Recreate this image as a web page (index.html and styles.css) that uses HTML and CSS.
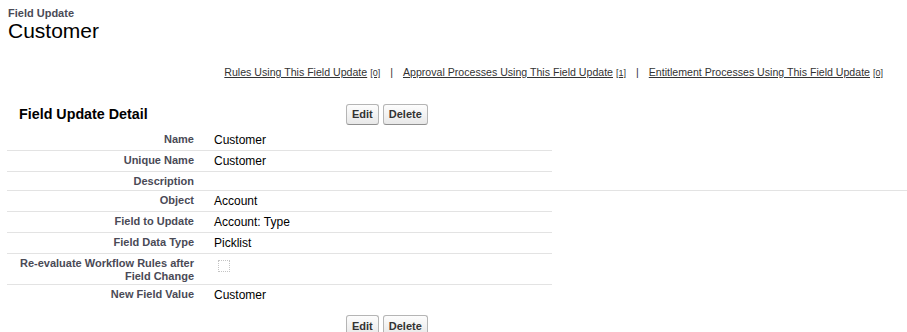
FILE: index.html
```html
<!DOCTYPE html>
<html lang="en">
<head>
    <meta charset="UTF-8">
    <title>Field Update: Customer</title>
    <link rel="stylesheet" href="styles.css">
</head>
<body>
    <div class="page-head">
        <div class="page-type">Field Update</div>
        <h1 class="page-title">Customer</h1>
    </div>

    <div class="links">
        <a href="#">Rules Using This Field Update<span class="count">[0]</span></a>
        <span class="sep">|</span>
        <a href="#">Approval Processes Using This Field Update<span class="count">[1]</span></a>
        <span class="sep">|</span>
        <a href="#">Entitlement Processes Using This Field Update<span class="count">[0]</span></a>
    </div>

    <div class="detail">
        <div class="detail-head">
            <h2 class="detail-title">Field Update Detail</h2>
            <div class="buttons">
                <button class="btn">Edit</button>
                <button class="btn">Delete</button>
            </div>
        </div>

        <div class="row">
            <div class="label">Name</div>
            <div class="value">Customer</div>
        </div>
        <div class="row">
            <div class="label">Unique Name</div>
            <div class="value">Customer</div>
        </div>
        <div class="row wide">
            <div class="label">Description</div>
            <div class="value"></div>
        </div>
        <div class="row">
            <div class="label">Object</div>
            <div class="value">Account</div>
        </div>
        <div class="row">
            <div class="label">Field to Update</div>
            <div class="value">Account: Type</div>
        </div>
        <div class="row">
            <div class="label">Field Data Type</div>
            <div class="value">Picklist</div>
        </div>
        <div class="row">
            <div class="label">Re-evaluate Workflow Rules after Field Change</div>
            <div class="value"><span class="checkbox"></span></div>
        </div>
        <div class="row last">
            <div class="label">New Field Value</div>
            <div class="value">Customer</div>
        </div>

        <div class="detail-foot">
            <button class="btn">Edit</button>
            <button class="btn">Delete</button>
        </div>
    </div>
</body>
</html>
```

FILE: styles.css
```css
body {
    margin: 0;
    padding: 0;
    font-family: "Liberation Sans", Arial, sans-serif;
    background-color: #fff;
    color: #000;
}
.page-head {
    padding: 7px 0 0 8px;
}
.page-type {
    font-size: 11px;
    line-height: 12px;
    font-weight: bold;
    color: #4a4a56;
}
.page-title {
    margin: 0;
    font-size: 21px;
    line-height: 24px;
    font-weight: normal;
}
.links {
    display: flex;
    justify-content: flex-end;
    margin-top: 23px;
    padding-right: 24px;
    font-size: 10.6px;
    line-height: 13px;
    color: #333;
}
.links a {
    color: #333;
    text-decoration: underline;
}
.links .count {
    margin-left: 3px;
    font-size: 9px;
}
.links .sep {
    margin: 0 10px;
}
.detail {
    margin-top: 21px;
    padding-left: 7px;
}
.detail-head {
    display: flex;
    align-items: center;
    width: 545px;
    height: 26px;
    margin-bottom: 3px;
}
.detail-title {
    width: 339px;
    box-sizing: border-box;
    margin: 0;
    padding-left: 12px;
    font-size: 14.3px;
    line-height: 18px;
    font-weight: bold;
}
.buttons {
    display: flex;
    gap: 4px;
}
.btn {
    height: 21px;
    padding: 0 5px;
    font-family: "Liberation Sans", Arial, sans-serif;
    font-size: 11px;
    font-weight: bold;
    color: #333;
    background: linear-gradient(#fdfdfd, #e8e8e8);
    border: 1px solid #b5b5b5;
    border-bottom-color: #8f8f8f;
    border-radius: 3px;
    cursor: pointer;
}
.row {
    display: flex;
    align-items: flex-start;
    width: 545px;
    min-height: 18px;
    border-bottom: 1px solid #e3e3e3;
}
.row.wide {
    width: 900px;
}
.row.last {
    border-bottom: none;
}
.label {
    width: 197px;
    flex-shrink: 0;
    box-sizing: border-box;
    padding: 3px 10px 1px 0;
    text-align: right;
    font-size: 11px;
    line-height: 13px;
    font-weight: bold;
    color: #4a4a56;
}
.value {
    flex: 1;
    padding: 3px 10px 3px;
    font-size: 12px;
    line-height: 14px;
}
.checkbox {
    display: block;
    width: 10px;
    height: 10px;
    margin: 3px 0 0 4px;
    border: 1px dotted #c4c4c4;
}
.detail-foot {
    display: flex;
    gap: 4px;
    margin-top: 10px;
    padding-left: 339px;
}
```
